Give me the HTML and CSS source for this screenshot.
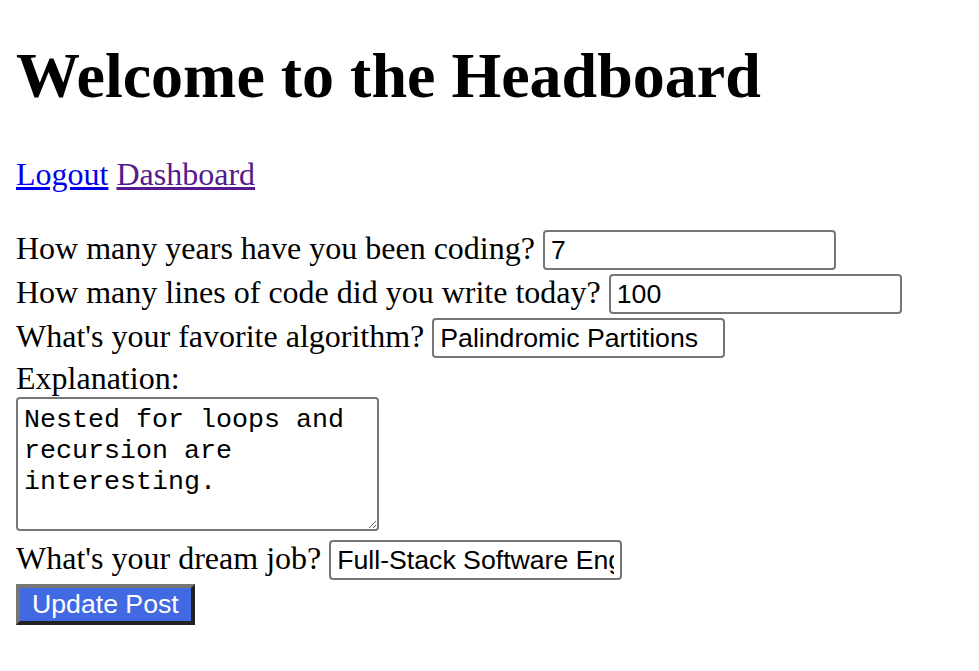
FILE: index.html
```html
<!DOCTYPE html>
<html>
<head>
<meta charset="utf-8">
<title>Headboard</title>
<link rel="stylesheet" href="styles.css">
</head>
<body>
<h1 class="title">Welcome to the Headboard</h1>
<p class="nav"><a class="link" href="#">Logout</a> <a class="link visited" href="#">Dashboard</a></p>
<form class="post-form">
  <label class="field">How many years have you been coding? <input class="text-input" type="text" value="7"></label><br>
  <label class="field">How many lines of code did you write today? <input class="text-input" type="text" value="100"></label><br>
  <label class="field">What's your favorite algorithm? <input class="text-input" type="text" value="Palindromic Partitions"></label><br>
  <label class="field">Explanation:</label><br>
  <textarea class="text-area">Nested for loops and recursion are interesting.</textarea><br>
  <label class="field">What's your dream job? <input class="text-input" type="text" value="Full-Stack Software Engineer"></label><br>
  <button class="submit" type="button">Update Post</button>
</form>
</body>
</html>
```

FILE: styles.css
```css
body {
  margin: 16px;
  font-family: "Liberation Serif", "Times New Roman", serif;
  font-size: 32px;
  color: #000;
  background: #fff;
}

.title {
  font-size: 64px;
  font-weight: bold;
  margin: 23px 0 43px;
}

.nav {
  margin: 32px 0 35px;
}

.link {
  color: #0000ee;
  text-decoration: underline;
}

.link.visited {
  color: #551a8b;
}

.post-form {
  margin: 0;
}

.text-input {
  font-family: "Liberation Sans", Arial, sans-serif;
  font-size: 26.67px;
  width: 293px;
  height: 40px;
  box-sizing: border-box;
  padding: 2px 6px;
  border: 2px solid #767676;
  border-radius: 4px;
  color: #000;
  background: #fff;
  margin: 2px 0;
}

.text-area {
  font-family: "Liberation Mono", "Courier New", monospace;
  font-size: 26.67px;
  line-height: 31px;
  width: 363px;
  height: 134px;
  box-sizing: border-box;
  padding: 6px 6px 4px;
  border: 2px solid #767676;
  border-radius: 4px;
  color: #000;
  background: #fff;
  margin: 0 0 6px;
  resize: both;
  vertical-align: text-bottom;
}

.submit {
  font-family: "Liberation Sans", Arial, sans-serif;
  font-size: 26.67px;
  color: #fff;
  background: #4169e1;
  border: 4px solid;
  border-color: #767676 #222 #222 #767676;
  padding: 0 12px;
  height: 41px;
  box-sizing: border-box;
  margin: 2px 0;
  white-space: nowrap;
}
```
